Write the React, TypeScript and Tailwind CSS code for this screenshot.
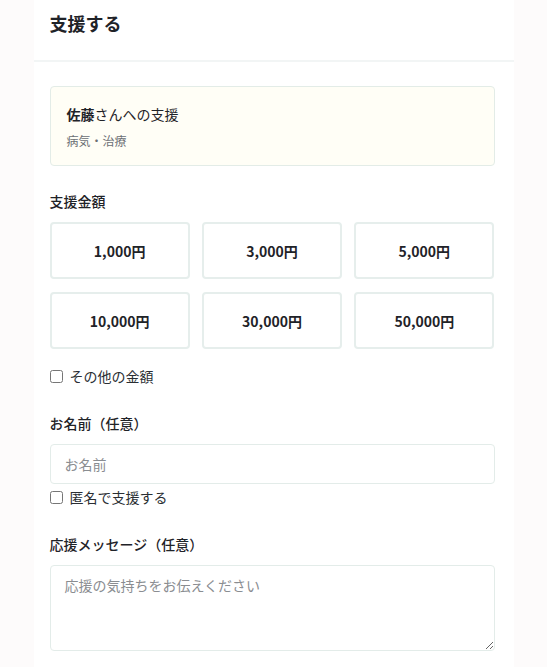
import { useState } from "react";

const amounts = [1000, 3000, 5000, 10000, 30000, 50000];

export default function App() {
  const [selected, setSelected] = useState<number | null>(null);
  const [other, setOther] = useState(false);
  const [anonymous, setAnonymous] = useState(false);
  const [name, setName] = useState("");
  const [message, setMessage] = useState("");

  return (
    <main
      className="min-h-screen bg-[#fdfbfb] text-[#1f2328]"
      style={{ fontFamily: '"Noto Sans CJK JP", "Noto Sans", sans-serif' }}
    >
      <div className="max-w-[480px] mx-auto bg-white">
        {/* Header */}
        <header className="h-[62px] pt-[9px] pl-4 border-b-2 border-[#f2f5f5]">
          <h1 className="text-lg leading-7 font-bold">支援する</h1>
        </header>

        <div className="pl-4 pr-[19px] pt-6 pb-4">
          {/* Recipient */}
          <div className="bg-[#fffef6] border border-[#e3ece7] rounded pt-[17px] pb-[15px] px-4">
            <p className="text-sm leading-[21px]">
              <span className="font-bold">佐藤</span>さんへの支援
            </p>
            <p className="mt-[7px] text-xs leading-[18px] text-[#6b6f74]">病気・治療</p>
          </div>

          {/* Amount */}
          <p className="mt-[25px] mb-[10px] text-sm leading-[21px] font-medium">支援金額</p>
          <div className="grid grid-cols-3 gap-x-3 gap-y-[13px]">
            {amounts.map((a) => (
              <button
                key={a}
                onClick={() => setSelected(a)}
                className={
                  "h-[57px] rounded border-2 text-sm font-bold " +
                  (selected === a
                    ? "border-[#8fc9b4] bg-[#f4fbf8]"
                    : "border-[#e6eeec] bg-white")
                }
              >
                {a.toLocaleString("en-US")}円
              </button>
            ))}
          </div>

          <label className="mt-[17px] flex items-center gap-[7px] text-sm leading-[21px] text-[#2a2e33]">
            <input
              type="checkbox"
              checked={other}
              onChange={() => setOther(!other)}
              className="w-[13px] h-[13px]"
            />
            その他の金額
          </label>

          {/* Name */}
          <p className="mt-[26px] mb-[10px] text-sm leading-[21px] font-medium">お名前（任意）</p>
          <input
            value={name}
            onChange={(e) => setName(e.target.value)}
            placeholder="お名前"
            className="w-full h-[40px] px-[14px] rounded border border-[#e3ece9] text-sm placeholder:text-[#8a8d91] outline-none"
          />
          <label className="mt-[3px] flex items-center gap-[7px] text-sm leading-[21px] text-[#2a2e33]">
            <input
              type="checkbox"
              checked={anonymous}
              onChange={() => setAnonymous(!anonymous)}
              className="w-[13px] h-[13px]"
            />
            匿名で支援する
          </label>

          {/* Message */}
          <p className="mt-[26px] mb-[10px] text-sm leading-[21px] font-medium">応援メッセージ（任意）</p>
          <textarea
            value={message}
            onChange={(e) => setMessage(e.target.value)}
            placeholder="応援の気持ちをお伝えください"
            className="block w-full h-[86px] px-[14px] py-[9px] rounded border border-[#e3ece9] text-sm leading-[21px] placeholder:text-[#8a8d91] outline-none"
          />
        </div>
      </div>
    </main>
  );
}
